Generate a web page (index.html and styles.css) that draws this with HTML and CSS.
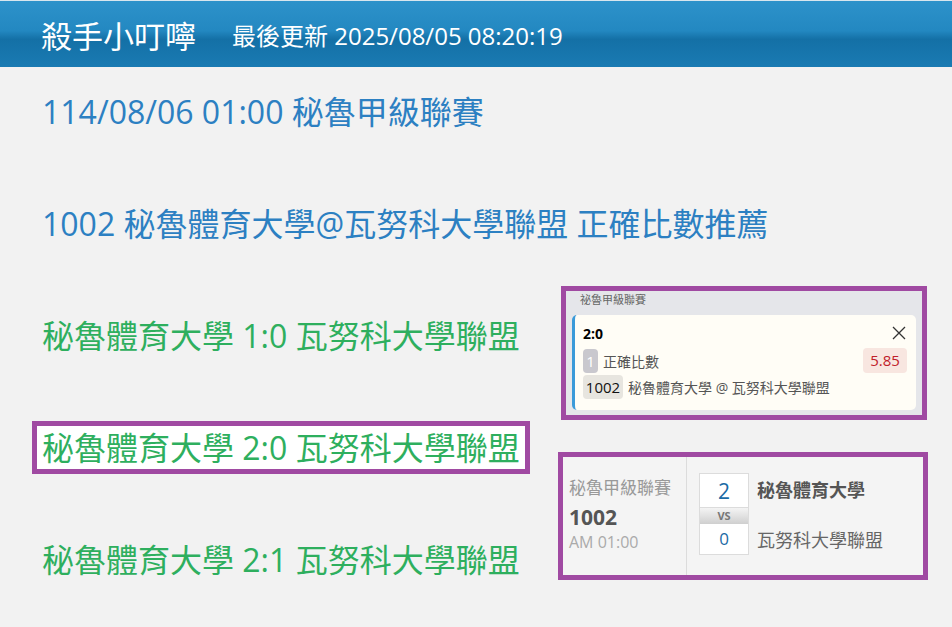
FILE: index.html
```html
<!DOCTYPE html>
<html lang="zh-Hant">
<head>
  <meta charset="UTF-8" />
  <meta name="viewport" content="width=device-width, initial-scale=1.0"/>
  <title>殺手小叮嚀</title>
  <link rel="stylesheet" href="styles.css">
</head>
<body>
  <header>
    <div class="app-title">殺手小叮嚀</div>
    <div class="updated">最後更新 2025/08/05 08:20:19</div>
  </header>

  <main class="page">
    <!-- Left: match info and score suggestions -->
    <div class="lines">
      <div class="line blue">114/08/06 01:00 秘魯甲級聯賽</div>
      <div class="line blue">1002 秘魯體育大學@瓦努科大學聯盟 正確比數推薦</div>
      <div class="line green">秘魯體育大學 1:0 瓦努科大學聯盟</div>
      <div class="line green picked">秘魯體育大學 2:0 瓦努科大學聯盟</div>
      <div class="line green">秘魯體育大學 2:1 瓦努科大學聯盟</div>
    </div>

    <!-- Right: bet slip and match card -->
    <div class="side">
      <div class="frame slip">
        <div class="slip-league">祕魯甲級聯賽</div>
        <div class="slip-card">
          <div class="slip-top">
            <span class="slip-score">2:0</span>
            <svg class="close" width="14" height="14" viewBox="0 0 14 14">
              <path d="M1 1 L13 13 M13 1 L1 13" stroke="#333" stroke-width="1.3" fill="none"/>
            </svg>
          </div>
          <div class="slip-row">
            <span class="badge num">1</span>
            <span class="slip-type">正確比數</span>
            <span class="odds">5.85</span>
          </div>
          <div class="slip-row">
            <span class="badge code">1002</span>
            <span class="slip-teams">秘魯體育大學 @ 瓦努科大學聯盟</span>
          </div>
        </div>
      </div>

      <div class="frame match">
        <div class="match-info">
          <div class="match-league">秘魯甲級聯賽</div>
          <div class="match-code">1002</div>
          <div class="match-time">AM 01:00</div>
        </div>
        <div class="match-score">
          <div class="scores">
            <div class="score home">2</div>
            <div class="vs">VS</div>
            <div class="score away">0</div>
          </div>
          <div class="teams">
            <div class="team home">秘魯體育大學</div>
            <div class="team away">瓦努科大學聯盟</div>
          </div>
        </div>
      </div>
    </div>
  </main>
</body>
</html>
```

FILE: styles.css
```css
body {
  margin: 0;
  font-family: "Open Sans", "Noto Sans CJK TC", sans-serif;
  background-color: #f2f2f2;
  color: #333;
}
header {
  height: 66px;
  border-top: 1px solid #d8e6ee;
  background: linear-gradient(#2d92ca 0%, #2388c1 45%, #1470a6 58%, #1a7bb3 100%);
  display: flex;
  align-items: center;
  padding-left: 41px;
  color: #fff;
}
.app-title {
  font-size: 31px;
  margin-right: 36px;
}
.updated {
  font-size: 24px;
  padding-top: 1px;
}
.page {
  display: flex;
}
.lines {
  flex: 1;
  min-width: 0;
  padding: 18px 0 0 32px;
}
.line {
  display: table;
  height: 43px;
  line-height: 43px;
  padding: 0 5px;
  margin-bottom: 59px;
  border: 5px solid transparent;
  font-size: 32px;
  white-space: nowrap;
}
.blue {
  color: #2c80c2;
}
.green {
  color: #2eaf5e;
}
.picked {
  border-color: #a04aa2;
  background-color: #fff;
}
.side {
  flex-shrink: 0;
  width: 370px;
  margin-right: 24px;
  padding-top: 219px;
}
.frame {
  border: 5px solid #a04aa2;
}
.slip {
  margin: 0 1px 32px 3px;
  background-color: #e5e6ea;
  padding: 0 6px 5px 6px;
}
.slip-league {
  height: 24px;
  line-height: 17px;
  font-size: 11px;
  color: #666;
  padding-left: 8px;
}
.slip-card {
  background-color: #fffdf6;
  border-left: 3px solid #3a9ad9;
  border-radius: 5px;
  height: 95px;
  padding: 0 9px 0 8px;
}
.slip-top {
  display: flex;
  justify-content: space-between;
  align-items: center;
  height: 30px;
  padding-top: 3px;
}
.slip-score {
  font-size: 14px;
  font-weight: bold;
  color: #000;
}
.close {
  margin-right: 1px;
}
.slip-row {
  display: flex;
  align-items: center;
  height: 25px;
  margin-bottom: 1px;
}
.badge {
  height: 24px;
  line-height: 24px;
  border-radius: 4px;
  font-size: 15px;
  text-align: center;
}
.num {
  width: 15px;
  background-color: #c9c8ce;
  color: #fff;
}
.code {
  width: 40px;
  background-color: #e7e5df;
  color: #111;
}
.slip-type {
  margin-left: 5px;
  font-size: 14px;
  color: #555;
}
.odds {
  margin-left: auto;
  width: 44px;
  height: 25px;
  line-height: 25px;
  text-align: center;
  border-radius: 4px;
  background-color: #f8e6e0;
  color: #c0202a;
  font-size: 15px;
}
.slip-teams {
  margin-left: 5px;
  font-size: 14px;
  color: #555;
  white-space: nowrap;
}
.match {
  display: flex;
  height: 118px;
  background-color: #f4f4f4;
}
.match-info {
  width: 117px;
  padding: 20px 0 0 6px;
  border-right: 1px solid #dcdcdc;
  white-space: nowrap;
}
.match-league {
  font-size: 17px;
  color: #999;
  line-height: 22px;
}
.match-code {
  font-size: 21px;
  font-weight: bold;
  color: #555;
  line-height: 28px;
  margin-top: 4px;
}
.match-time {
  font-size: 16px;
  color: #aaa;
  line-height: 22px;
}
.match-score {
  display: flex;
  padding: 16px 0 0 12px;
}
.scores {
  width: 50px;
}
.score {
  box-sizing: border-box;
  border: 1px solid #dcdcdc;
  background-color: #fff;
  text-align: center;
  color: #1a6aa5;
}
.score.home {
  height: 35px;
  line-height: 35px;
  font-size: 21px;
}
.score.away {
  height: 31px;
  line-height: 30px;
  font-size: 17px;
  border-top: none;
}
.vs {
  height: 16px;
  line-height: 16px;
  font-size: 11px;
  font-weight: bold;
  text-align: center;
  color: #777;
  background: linear-gradient(#f4f4f4, #cfcfcf);
  border-left: 1px solid #dcdcdc;
  border-right: 1px solid #dcdcdc;
  box-sizing: border-box;
}
.teams {
  padding-left: 8px;
  white-space: nowrap;
}
.team {
  font-size: 18px;
  color: #555;
  line-height: 24px;
}
.team.home {
  font-weight: bold;
  margin-top: 5px;
}
.team.away {
  margin-top: 26px;
  color: #666;
}
```
